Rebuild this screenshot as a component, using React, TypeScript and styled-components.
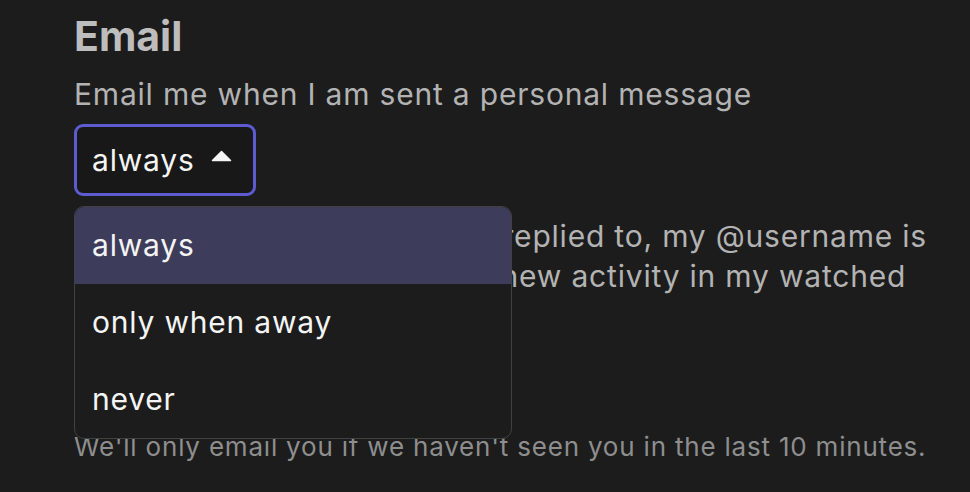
import React, { FC } from 'react';
import styled, { createGlobalStyle } from 'styled-components';

const GlobalStyle = createGlobalStyle`
  html, body {
    margin: 0;
    padding: 0;
    background: #1c1c1c;
  }
  body {
    font-family: Inter, "Noto Sans", sans-serif;
    overflow: hidden;
  }
`;

const Page = styled.div`
  padding: 12px 0 0 74px;
  width: 970px;
  height: 492px;
  box-sizing: border-box;
  overflow: hidden;
`;

const Heading = styled.h2`
  margin: 0 0 14px;
  font-size: 41px;
  line-height: 48px;
  font-weight: 700;
  color: #bdbdbd;
`;

const Group = styled.div`
  position: relative;
  margin-bottom: 20px;
`;

const Label = styled.div`
  font-size: 30px;
  line-height: 40px;
  letter-spacing: 0.8px;
  color: #b3b3b3;
  margin-bottom: 10px;
  width: 870px;
`;

const SelectBox = styled.div<{ $open?: boolean }>`
  display: inline-flex;
  align-items: center;
  gap: 16px;
  padding: 13px 21px 13px 15px;
  border: 3px solid ${(p) => (p.$open ? '#5c5cd0' : '#3f3f3f')};
  border-radius: 9px;
  background: #181818;
  color: #f4f4f4;
  font-size: 30px;
  line-height: 40px;
  letter-spacing: 0.8px;
`;

const Caret = styled.svg`
  width: 21px;
  height: 12px;
  margin-top: -8px;
`;

const Menu = styled.ul`
  position: absolute;
  left: 0;
  top: 132px;
  z-index: 2;
  width: 438px;
  margin: 0;
  padding: 0;
  list-style: none;
  box-sizing: border-box;
  border: 1px solid #414141;
  border-radius: 10px;
  background: #1c1c1c;
  overflow: hidden;
`;

const Option = styled.li<{ $active?: boolean }>`
  padding: 18px 17px 19px;
  font-size: 30px;
  line-height: 40px;
  letter-spacing: 0.8px;
  color: #f4f4f4;
  background: ${(p) => (p.$active ? '#3d3d5b' : 'transparent')};
`;

const Hint = styled.div`
  margin-top: 13px;
  font-size: 26px;
  line-height: 32px;
  letter-spacing: 0.8px;
  color: #8e8e8e;
  white-space: nowrap;
`;

const Next = styled.div`
  margin-top: 26px;
  font-size: 30px;
  line-height: 40px;
  letter-spacing: 0.8px;
  color: #b3b3b3;
  white-space: nowrap;
`;

const CaretUp: FC = () => (
  <Caret viewBox="0 0 21 12">
    <path d="M10.5 1.5 L19.5 10.5 H1.5 Z" fill="#f4f4f4" stroke="#f4f4f4" strokeWidth="1.5" strokeLinejoin="round" />
  </Caret>
);

const options = ['always', 'only when away', 'never'];

const App: FC = () => (
  <Page>
    <GlobalStyle />
    <Heading>Email</Heading>
    <Group>
      <Label>Email me when I am sent a personal message</Label>
      <SelectBox $open>
        always
        <CaretUp />
      </SelectBox>
      <Menu>
        {options.map((o, i) => (
          <Option key={o} $active={i === 0}>
            {o}
          </Option>
        ))}
      </Menu>
    </Group>
    <Group>
      <Label>
        Email me when I am quoted, replied to, my @username is mentioned, or when there is new activity in my watched
        categories, tags or topics
      </Label>
      <SelectBox>only when away</SelectBox>
      <Hint>We'll only email you if we haven't seen you in the last 10 minutes.</Hint>
      <Next>Include an excerpt of replied to post in emails</Next>
    </Group>
  </Page>
);

export default App;
